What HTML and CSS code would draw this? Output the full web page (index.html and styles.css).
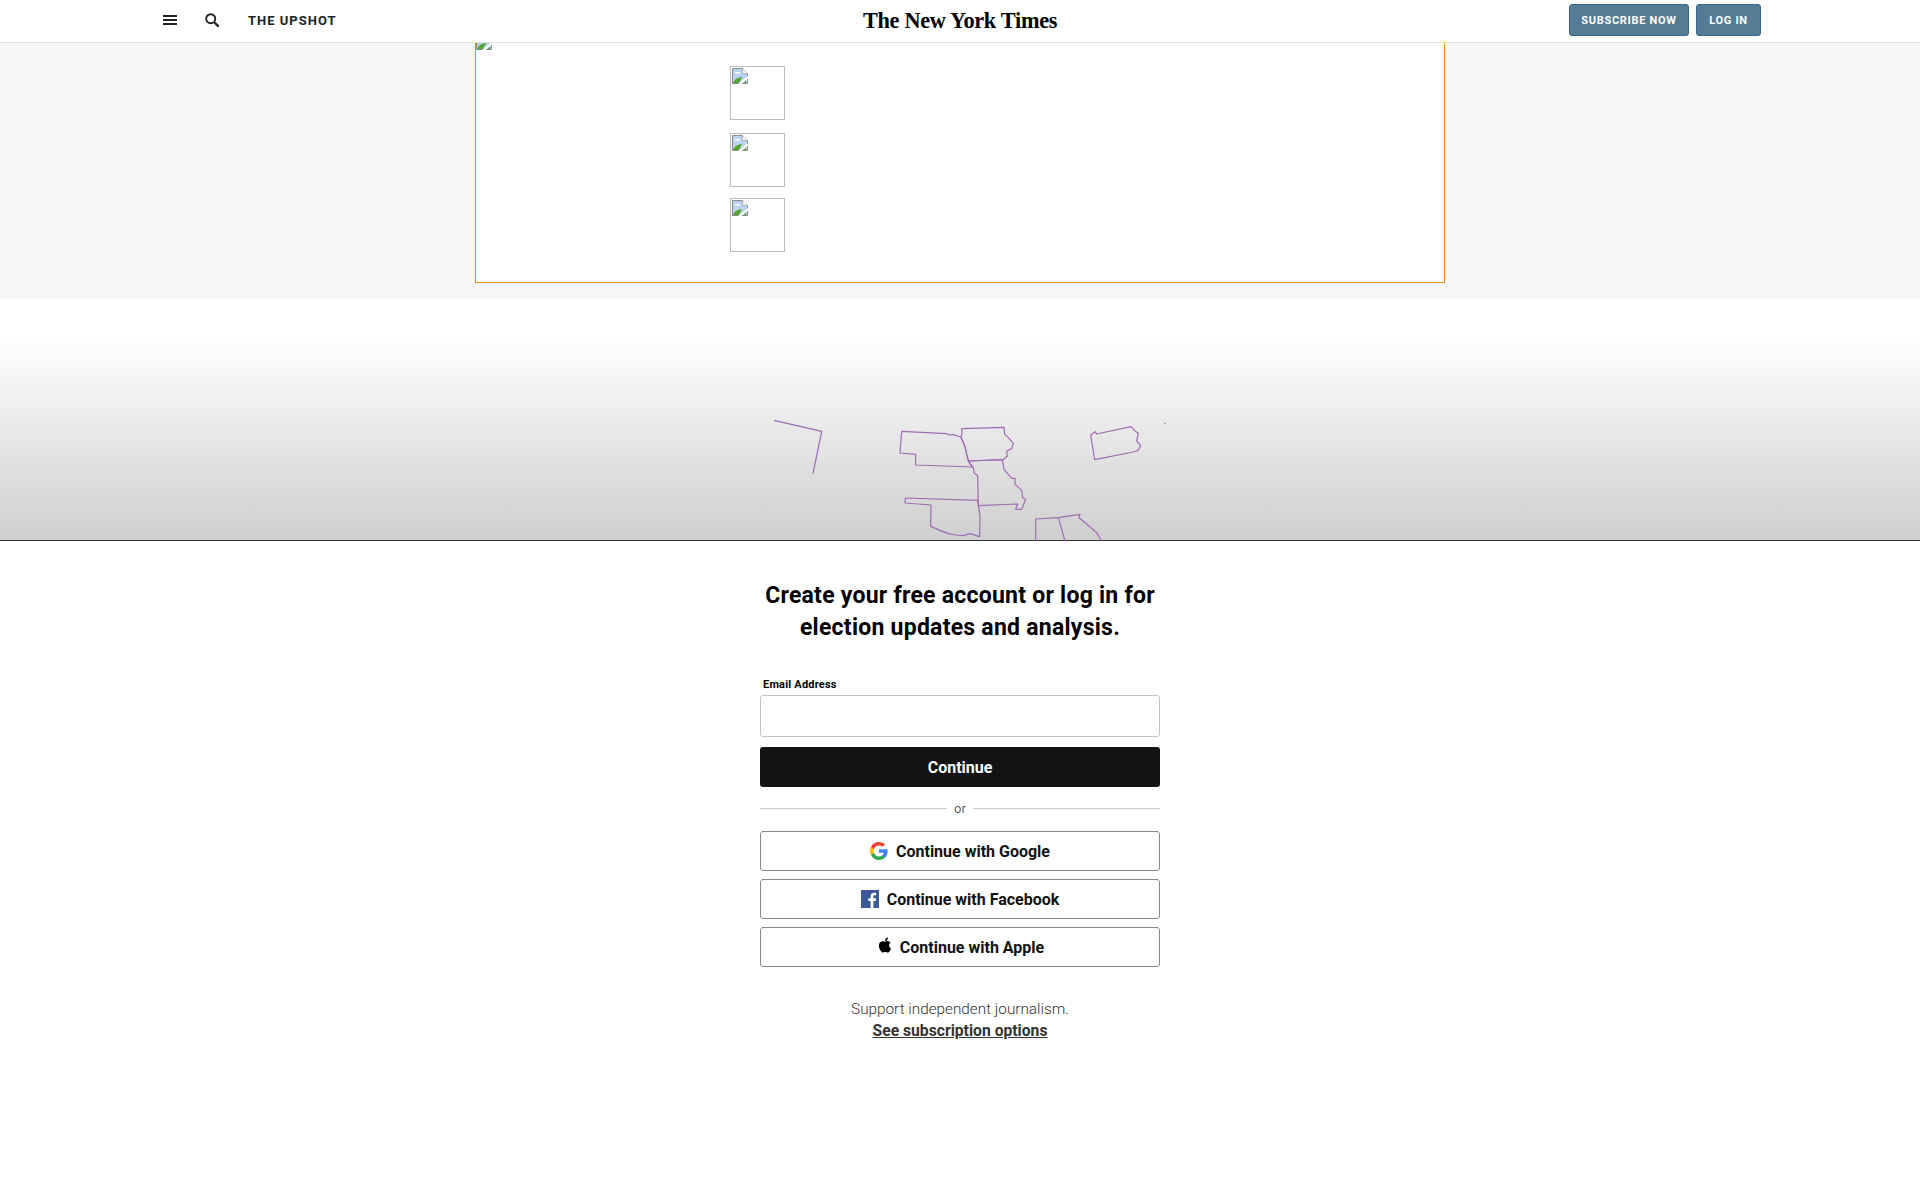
FILE: index.html
```html
<!DOCTYPE html>
<html lang="en">
<head>
    <meta charset="UTF-8">
    <meta name="viewport" content="width=device-width, initial-scale=1.0">
    <title>The Upshot - The New York Times</title>
    <link rel="stylesheet" href="styles.css">
</head>
<body>
    <svg class="sprites" width="0" height="0">
        <symbol id="broken" viewBox="0 0 16 16">
            <path d="M.5.5h10l5 5v10H.5z" fill="#fff" stroke="#8a8a8a"/>
            <path d="M1 1h9v5h5v9H1z" fill="#bcd2f5"/>
            <path d="M3 4h5v1.500H3z" fill="#fff"/>
            <path d="M1 15c1-3 4-5.500 9-6l-3 6z" fill="#55a332"/>
            <path d="M10.500 .5v5h5" fill="#fff" stroke="#b0b0b0"/>
            <path d="M6 16L16 8v2.500L9.500 16z" fill="#fff"/>
            <path d="M11.500 15l2.500-2.500V15z" fill="#55a332"/>
        </symbol>
    </svg>

    <header class="topbar">
        <div class="topbar-left">
            <svg class="icon-menu" width="14" height="10" viewBox="0 0 14 10"><path d="M0 0h14v2H0zM0 4h14v2H0zM0 8h14v2H0z" fill="#222"/></svg>
            <svg class="icon-search" width="15" height="15" viewBox="0 0 15 15"><circle cx="5.700" cy="5.700" r="4.500" fill="none" stroke="#222" stroke-width="1.900"/><path d="M9 9l4.600 4.600" stroke="#222" stroke-width="2.400"/></svg>
            <span class="section-name">THE UPSHOT</span>
        </div>
        <div class="logo">The New York Times</div>
        <div class="topbar-right">
            <a class="btn-top btn-subscribe">SUBSCRIBE NOW</a>
            <a class="btn-top btn-login">LOG IN</a>
        </div>
    </header>

    <section class="ad-band">
        <div class="ad-box">
            <div class="ad-clip"><svg class="broken-icon clipped"><use href="#broken"/></svg></div>
            <div class="thumb first"><svg class="broken-icon"><use href="#broken"/></svg></div>
            <div class="thumb second"><svg class="broken-icon"><use href="#broken"/></svg></div>
            <div class="thumb third"><svg class="broken-icon"><use href="#broken"/></svg></div>
        </div>
    </section>

    <section class="map-fade">
        <svg class="map" width="420" height="140" viewBox="0 0 1260 420">
            <g fill="none" stroke="#a06cb2" stroke-width="3.600" stroke-linejoin="round">
                <path d="M72 58L215 91L189 218"/>
                <path d="M455 91L590 98Q596 104 610 101L632 108Q645 130 650 160L655 178Q658 190 668 198L497 192L497 160L450 156Z"/>
                <path d="M635 83L762 79L764 100L775 110L790 127L785 143L770 150L772 165L760 176L655 180L650 160Q645 130 632 108L636 100Z"/>
                <path d="M655 180L757 176L762 205L785 232L795 232L795 250L815 268L818 290L827 295L815 325L797 325L803 309L685 314L683 225L672 215L670 200Z"/>
                <path d="M466 291L683 298L690 345L689 407L660 398L640 404L618 402L595 398L570 388L542 376L543 312L465 306Z"/>
                <path d="M857 420L857 354L925 350L945 420M925 350L990 340L987 350L1005 365L1040 395L1055 420"/>
                <path d="M1022 102L1036 92L1040 99L1143 77L1155 90L1165 97L1160 120L1172 133L1165 148L1150 153L1034 176Z"/>
                <path d="M1243 67h4"/>
            </g>
        </svg>
    </section>

    <main class="signup">
        <h1>Create your free account or log in for<br>election updates and analysis.</h1>
        <label class="email-label" for="email">Email Address</label>
        <input class="email-input" id="email" type="email">
        <button class="btn-continue">Continue</button>
        <div class="divider"><span>or</span></div>
        <button class="btn-social">
            <svg width="18" height="18" viewBox="0 0 18 18">
                <path d="M17.640 9.200c0-.64-.06-1.250-.16-1.840H9v3.480h4.840a4.140 4.140 0 0 1-1.800 2.720v2.260h2.920c1.700-1.570 2.680-3.880 2.680-6.620z" fill="#4285f4"/>
                <path d="M9 18c2.430 0 4.470-.8 5.960-2.180l-2.920-2.260c-.8.54-1.840.86-3.040.86-2.340 0-4.330-1.580-5.040-3.700H.96v2.330A9 9 0 0 0 9 18z" fill="#34a853"/>
                <path d="M3.960 10.720a5.400 5.400 0 0 1 0-3.440V4.950H.96a9 9 0 0 0 0 8.100z" fill="#fbbc05"/>
                <path d="M9 3.580c1.320 0 2.500.45 3.440 1.350l2.580-2.580C13.460.89 11.430 0 9 0A9 9 0 0 0 .96 4.950l3 2.330C4.670 5.160 6.660 3.580 9 3.580z" fill="#ea4335"/>
            </svg>
            Continue with Google
        </button>
        <button class="btn-social facebook">
            <svg width="18" height="18" viewBox="0 0 18 18">
                <path d="M0 0h18v18H0z" fill="#3b5998"/>
                <path d="M12.400 18v-7h2.300l.4-2.700h-2.700V6.600c0-.8.2-1.300 1.300-1.300h1.500V2.900c-.3 0-1.100-.1-2.100-.1-2.100 0-3.500 1.300-3.500 3.600v1.900H7.300V11h2.300v7z" fill="#fff"/>
            </svg>
            Continue with Facebook
        </button>
        <button class="btn-social apple">
            <svg class="icon-apple" width="18" height="18" viewBox="0 0 24 24">
                <path d="M18.710 19.500c-.83 1.240-1.710 2.450-3.050 2.470-1.340.03-1.770-.79-3.290-.79-1.530 0-2 .77-3.270.82-1.310.05-2.300-1.320-3.140-2.530C4.250 17 2.940 12.450 4.700 9.390c.87-1.520 2.430-2.480 4.120-2.510 1.280-.02 2.500.87 3.290.87.78 0 2.260-1.070 3.810-.91.65.03 2.470.26 3.640 1.980-.09.06-2.170 1.280-2.150 3.810.03 3.020 2.650 4.030 2.680 4.040-.03.07-.42 1.440-1.380 2.830M13 3.500c.73-.83 1.940-1.460 2.940-1.500.13 1.170-.34 2.350-1.040 3.190-.69.85-1.830 1.510-2.950 1.420-.15-1.150.41-2.350 1.050-3.110z" fill="#000"/>
            </svg>
            Continue with Apple
        </button>
        <p class="support">Support independent journalism.</p>
        <a class="sub-link">See subscription options</a>
    </main>
</body>
</html>
```

FILE: styles.css
```css
*{
    box-sizing: border-box;
    margin: 0;
    padding: 0;
    font-family: Roboto, "Liberation Sans", Arial, sans-serif;
}
body{
    background: white;
    color: #121212;
}
.sprites{
    display: block;
    height: 0;
}

/* top bar */
.topbar{
    display: grid;
    grid-template-columns: 1fr auto 1fr;
    align-items: center;
    height: 43px;
    padding: 0 159px 0 163px;
    background: white;
    border-bottom: 1px solid #e2e2e2;
}
.topbar-left{
    display: flex;
    align-items: center;
    margin-top: -2px;
}
.icon-menu{
    margin-right: 28px;
}
.icon-search{
    margin-right: 28px;
}
.section-name{
    font-size: 13px;
    font-weight: bold;
    letter-spacing: 1px;
    color: #222;
}
.logo{
    margin-right: 4px;
    font-family: "Liberation Serif", serif;
    font-size: 22.300px;
    font-weight: bold;
    letter-spacing: -0.3px;
    color: #000;
    white-space: nowrap;
}
.topbar-right{
    display: flex;
    justify-content: flex-end;
    gap: 7px;
    margin-top: -3px;
}
.btn-top{
    display: flex;
    align-items: center;
    justify-content: center;
    height: 32px;
    padding-top: 1px;
    background: #567b95;
    border: 1px solid #326891;
    border-radius: 3px;
    color: white;
    font-size: 11px;
    font-weight: bold;
    letter-spacing: 0.7px;
}
.btn-subscribe{
    width: 120px;
}
.btn-login{
    width: 65px;
}

/* band with the empty ad */
.ad-band{
    height: 256px;
    background: #f7f7f7;
    padding-left: 475px;
}
.ad-box{
    width: 970px;
    height: 240px;
    background: white;
    border: 1px solid #f28c1e;
    border-top: none;
    padding-left: 254px;
}
.ad-clip{
    height: 7px;
    margin-left: -254px;
    margin-bottom: 16px;
    overflow: hidden;
}
.broken-icon{
    display: block;
    width: 16px;
    height: 16px;
}
.broken-icon.clipped{
    margin-top: -9px;
}
.thumb{
    width: 55px;
    height: 54px;
    padding: 1px;
    border: 1px solid #bbb;
}
.thumb.second{
    margin-top: 13px;
}
.thumb.third{
    margin-top: 11px;
}

/* map behind the fade */
.map-fade{
    display: flex;
    justify-content: center;
    align-items: flex-end;
    height: 242px;
    background: linear-gradient(to bottom, white 15%, #cfcfcf 100%);
    border-bottom: 1px solid #333;
}
.map{
    display: block;
    margin-bottom: -1px;
}

/* sign up form */
.signup{
    display: flex;
    flex-direction: column;
    align-items: center;
    width: 400px;
    margin: 0 auto;
    padding-top: 39px;
}
h1{
    width: 400px;
    font-size: 23px;
    line-height: 32px;
    font-weight: bold;
    letter-spacing: 0.25px;
    text-align: center;
    color: #000;
}
.email-label{
    align-self: flex-start;
    margin: 34px 0 3px 3px;
    font-size: 11px;
    line-height: 14px;
    font-weight: bold;
    letter-spacing: 0.2px;
    color: #000;
}
.email-input{
    display: block;
    width: 100%;
    height: 42px;
    background: white;
    border: 1px solid #c4c4c4;
    border-radius: 3px;
}
.btn-continue{
    width: 100%;
    height: 40px;
    margin-top: 10px;
    background: #121212;
    border: none;
    border-radius: 3px;
    color: white;
    font-size: 16px;
    font-weight: bold;
}
.divider{
    display: flex;
    align-items: center;
    gap: 7px;
    width: 100%;
    height: 16px;
    margin: 13px 0 15px;
    font-size: 13px;
    color: #666;
}
.divider::before,
.divider::after{
    content: "";
    flex: 1;
    height: 1px;
    background: #ccc;
}
.btn-social{
    display: flex;
    align-items: center;
    justify-content: center;
    gap: 8px;
    width: 100%;
    height: 40px;
    margin-bottom: 8px;
    background: white;
    border: 1px solid #888;
    border-radius: 3px;
    color: #121212;
    font-size: 16px;
    font-weight: bold;
}
.btn-social.apple{
    gap: 6px;
}
.icon-apple{
    margin-top: -4px;
}
.support{
    margin-top: 23px;
    font-size: 15.300px;
    font-weight: 300;
    line-height: 22px;
    color: #333;
}
.sub-link{
    font-size: 15.700px;
    line-height: 22px;
    font-weight: bold;
    color: #333;
    text-decoration: underline;
}
```
